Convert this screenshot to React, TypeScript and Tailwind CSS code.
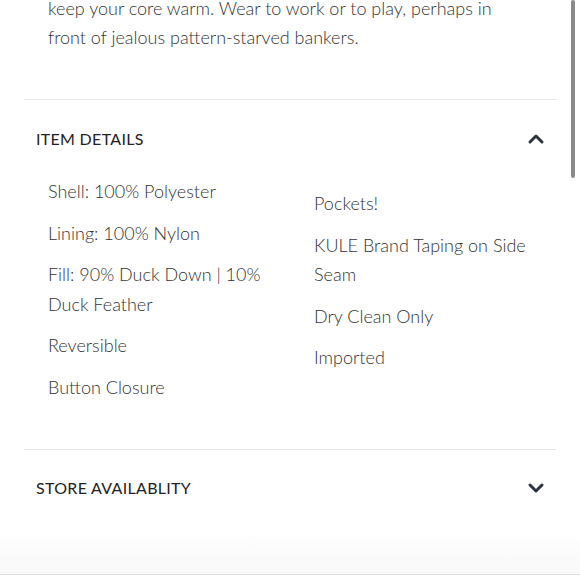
import { ChevronDown, ChevronUp } from "lucide-react";

const leftItems = [
  "Shell: 100% Polyester",
  "Lining: 100% Nylon",
  "Fill: 90% Duck Down | 10% Duck Feather",
  "Reversible",
  "Button Closure",
];

const rightItems = ["Pockets!", "KULE Brand Taping on Side Seam", "Dry Clean Only", "Imported"];

function ItemList({ items, className }: { items: string[]; className?: string }) {
  return (
    <ul className={`flex flex-col gap-3 ${className ?? ""}`}>
      {items.map((item) => (
        <li key={item} className="text-[18px] leading-[29.5px] text-[#333]">
          {item}
        </li>
      ))}
    </ul>
  );
}

export default function App() {
  return (
    <div
      className="relative h-[580px] w-[580px] overflow-hidden bg-white"
      style={{ fontFamily: '"Lato", "Liberation Sans", sans-serif' }}
    >
      <div className="px-6">
        <p className="-mt-[6px] px-6 pb-[47px] text-[18px] font-light leading-[29px] text-[#333]">
          keep your core warm. Wear to work or to play, perhaps in front of jealous pattern-starved bankers.
        </p>

        <section className="border-t border-[#e6e6e6]">
          <div className="flex items-center justify-between pb-[26px] pl-3 pr-[8px] pt-[27px]">
            <h2 className="text-[16px] leading-[22px] tracking-[0.3px] text-[#222]">ITEM DETAILS</h2>
            <ChevronUp size={24} strokeWidth={3} className="text-[#2d3340]" />
          </div>
          <div className="grid grid-cols-[250px_1fr] gap-4 pb-[47px] pl-6 pr-3 font-light">
            <ItemList items={leftItems} />
            <ItemList items={rightItems} className="pt-3" />
          </div>
        </section>

        <section className="border-t border-[#e6e6e6]">
          <div className="flex items-center justify-between pb-[25px] pl-3 pr-[8px] pt-[26px]">
            <h2 className="text-[16px] leading-[22px] tracking-[0.3px] text-[#222]">STORE AVAILABLITY</h2>
            <ChevronDown size={24} strokeWidth={3} className="text-[#2d3340]" />
          </div>
        </section>
      </div>

      <div className="absolute bottom-[5px] left-0 right-0 h-[44px] border-b border-[#dedede] bg-gradient-to-b from-white to-[#f8f8f8]" />
      <div className="absolute right-[5px] top-0 h-[178px] w-[4px] rounded-full bg-[#8a8a8a]" />
    </div>
  );
}
